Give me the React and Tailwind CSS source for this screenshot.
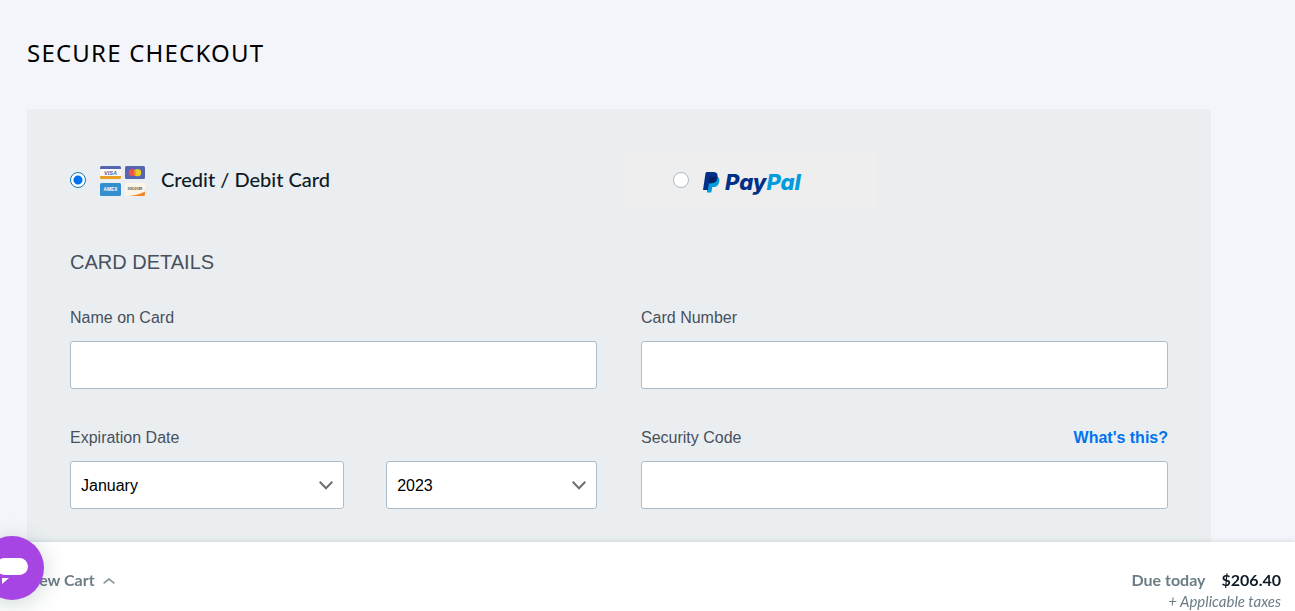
import { useState } from "react";

const months = [
  "January", "February", "March", "April", "May", "June", "July",
  "August", "September", "October", "November", "December",
];
const years = ["2023", "2024", "2025", "2026", "2027", "2028", "2029", "2030"];

const labelClass = "block text-base leading-[26px] text-[#48505c]";
const fieldClass =
  "block h-12 w-full rounded-[3px] border border-[#acbdc9] bg-white px-2.5 text-base text-black outline-none focus:border-[#0073ec]";

function CardLogos() {
  return (
    <svg className="mt-0.5" width="45" height="30" viewBox="0 0 45 30" aria-hidden="true">
      <rect x="0" y="0" width="21" height="13" rx="1.5" fill="#fbfaf8" />
      <path d="M0 3V1.5A1.5 1.5 0 0 1 1.5 0h18A1.5 1.5 0 0 1 21 1.5V3Z" fill="#5565af" />
      <path d="M0 10h21v1.5a1.5 1.5 0 0 1-1.5 1.5h-18A1.5 1.5 0 0 1 0 11.5Z" fill="#e6a124" />
      <text x="10.5" y="8.8" fontSize="5.5" fontWeight="700" fontStyle="italic" textAnchor="middle" fill="#5565af" fontFamily="Liberation Sans, sans-serif">VISA</text>
      <rect x="25" y="0" width="20" height="13" rx="1.5" fill="#5565af" />
      <circle cx="32.3" cy="6.7" r="3.6" fill="#ec524b" />
      <circle cx="37.6" cy="6.7" r="3.6" fill="#eacb24" />
      <path d="M34.950 4.250a3.600 3.600 0 0 1 0 4.900a3.600 3.600 0 0 1 0-4.900Z" fill="#ee8b2c" />
      <rect x="0" y="17" width="21" height="13" rx="1.5" fill="#348fcf" />
      <text x="10.5" y="25.3" fontSize="4.800" fontWeight="700" textAnchor="middle" fill="#fff" fontFamily="Liberation Sans, sans-serif">AMEX</text>
      <rect x="25" y="17" width="20" height="13" rx="1.5" fill="#fbf4e9" />
      <path d="M29.500 30Q39 28.500 45 25.500V28.500A1.500 1.500 0 0 1 43.500 30Z" fill="#f58427" />
      <text x="35" y="24.300" fontSize="2.800" fontWeight="700" textAnchor="middle" fill="#4b4845" fontFamily="Liberation Sans, sans-serif">DISCOVER</text>
      <circle cx="35.300" cy="23.300" r="1" fill="#f58427" />
    </svg>
  );
}

function PayPalLogo() {
  return (
    <span className="flex items-center gap-[5px]">
      <svg width="17" height="21" viewBox="0 0 17 21" aria-hidden="true">
        <path d="M5.500 4.500H14.300Q17 6 16.300 9.500Q15.300 15 10.500 15H9.300L8.300 20.500H3.900Z" fill="#009cde" />
        <path d="M4 0H10Q15.300 0 14.500 5Q13.300 11.300 7.500 11.300H5.900L4.900 18H0L2.500 1.300Q2.700 0 4 0Z" fill="#003087" />
        <path d="M7.400 4.700H14.550Q14.200 11.300 7.500 11.300H5.900L6.600 5.700Q6.700 4.700 7.400 4.700Z" fill="#012169" />
      </svg>
      <span className="font-['Inter',sans-serif] text-[22px] leading-6 font-extrabold italic text-[#003087]">
        Pay<span className="text-[#009cde]">Pal</span>
      </span>
    </span>
  );
}

function PaymentRadio({ id, checked, onChange }) {
  return (
    <input
      id={id}
      type="radio"
      name="payment"
      checked={checked}
      onChange={onChange}
      className="size-4 shrink-0 appearance-none rounded-full border border-[#acbdc9] bg-white checked:border-[#0b7bb0] checked:bg-[radial-gradient(circle,#0073ec_4px,white_5px)]"
    />
  );
}

function SelectField({ label, options }) {
  return (
    <div className="relative">
      <select aria-label={label} className={`${fieldClass} appearance-none pt-0.5 pr-10`}>
        {options.map((option) => (
          <option key={option}>{option}</option>
        ))}
      </select>
      <svg className="pointer-events-none absolute top-5 right-[11px]" width="14" height="9" viewBox="0 0 14 9" fill="none" stroke="#6e6e6e" strokeWidth="2" aria-hidden="true">
        <path d="M0.700 0.800L7 7.200L13.300 0.800" />
      </svg>
    </div>
  );
}

export default function App() {
  const [method, setMethod] = useState("card");

  return (
    <div className="flex min-h-screen flex-col bg-[#f4f5fa] font-['Liberation_Sans',Arial,sans-serif]">
      <main className="flex w-full max-w-[1211px] flex-1 flex-col pt-[35px] pl-[27px]">
        <h1 className="font-['Noto_Sans',sans-serif] text-2xl leading-9 tracking-wider text-black">
          SECURE CHECKOUT
        </h1>

        <form className="mt-[38px] flex-1 bg-[#eaeef1] px-[43px] pt-[43px] pb-20">
          <div className="grid grid-cols-[556fr_542fr]">
            <div className="flex h-14 items-center">
              <PaymentRadio id="card" checked={method === "card"} onChange={() => setMethod("card")} />
              <label htmlFor="card" className="flex items-center gap-4 pl-3.5 font-['Lato',sans-serif] text-xl font-medium text-[#0f1b26]">
                <CardLogos />
                <span className="pb-0.5">Credit / Debit Card</span>
              </label>
            </div>
            <div className="flex h-14 w-[250px] items-center bg-[#eeeeee] pl-[47px]">
              <PaymentRadio id="paypal" checked={method === "paypal"} onChange={() => setMethod("paypal")} />
              <label htmlFor="paypal" className="pt-1 pl-3.5">
                <PayPalLogo />
              </label>
            </div>
          </div>

          <h2 className="mt-10 text-xl leading-7 text-[#48505c]">CARD DETAILS</h2>

          <div className="mt-[29px] grid grid-cols-2 gap-x-11 gap-y-9">
            <div className="flex flex-col gap-2.5">
              <label htmlFor="name" className={labelClass}>Name on Card</label>
              <input id="name" type="text" className={fieldClass} />
            </div>
            <div className="flex flex-col gap-2.5">
              <label htmlFor="number" className={labelClass}>Card Number</label>
              <input id="number" type="text" inputMode="numeric" className={fieldClass} />
            </div>
            <fieldset>
              <legend className={`${labelClass} mb-2.5`}>Expiration Date</legend>
              <div className="grid grid-cols-[13fr_10fr] gap-[42px]">
                <SelectField label="Expiration month" options={months} />
                <SelectField label="Expiration year" options={years} />
              </div>
            </fieldset>
            <div className="flex flex-col gap-2.5">
              <div className="flex justify-between">
                <label htmlFor="code" className={labelClass}>Security Code</label>
                <a href="#code" className="text-base leading-[26px] font-bold text-[#0073ec]">What's this?</a>
              </div>
              <input id="code" type="text" inputMode="numeric" className={fieldClass} />
            </div>
          </div>
        </form>
      </main>

      <footer className="fixed inset-x-0 bottom-0 flex items-start justify-between bg-white pt-[26px] pr-3.5 pl-6 font-['Lato',sans-serif] text-[#6b7c85] shadow-[0_0_6px_rgba(60,80,90,0.2)]">
        <button type="button" className="flex items-center gap-2 text-base leading-6 font-bold">
          View Cart
          <svg className="mt-0.5" width="12" height="6" viewBox="0 0 12 6" fill="none" stroke="#8b969c" strokeWidth="1.7" aria-hidden="true">
            <path d="M0.600 5.300L6 1L11.400 5.300" />
          </svg>
        </button>
        <div className="text-right">
          <p className="flex justify-end gap-4 text-base leading-6 font-bold">
            <span>Due today</span>
            <span className="text-[#0f1b26]">$206.40</span>
          </p>
          <p className="text-[15px] leading-[19px] italic">+ Applicable taxes</p>
        </div>
      </footer>

      <button type="button" aria-label="Open chat" className="fixed bottom-[11px] -left-5 size-16 rounded-full bg-[#a744e4] shadow-[0_4px_24px_rgba(0,60,50,0.2)]">
        <svg width="64" height="64" viewBox="0 0 64 64" aria-hidden="true">
          <rect x="16" y="22" width="32" height="17" rx="8.5" fill="#fff" />
          <path d="M22 42H29L22 48Z" fill="#fff" />
        </svg>
      </button>
    </div>
  );
}
